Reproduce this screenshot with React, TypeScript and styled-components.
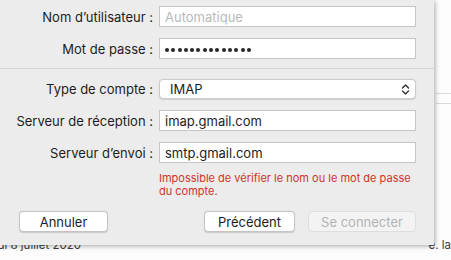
import styled, { createGlobalStyle } from "styled-components";

const Global = createGlobalStyle`
  html, body {
    margin: 0;
    padding: 0;
    width: 451px;
    height: 260px;
    overflow: hidden;
    background: #ffffff;
    font-family: Inter, "Liberation Sans", Arial, sans-serif;
    -webkit-font-smoothing: antialiased;
  }
`;

const Window = styled.div`
  position: relative;
  width: 451px;
  height: 260px;
  background: #fdfdfd;
  display: flex;
  flex-direction: column;
`;

const ListLines = styled.div`
  margin-top: 93px;
  margin-left: 436px;
  height: 9px;
  border-top: 1px solid #dadada;
  border-bottom: 1px solid #dadada;
`;

const DateRow = styled.div`
  margin-top: auto;
  height: 21px;
  display: flex;
  justify-content: space-between;
  font-size: 11.5px;
  color: #3a3a3a;
  line-height: 13px;
`;

const DateCell = styled.div`
  width: 81px;
  display: flex;
  justify-content: flex-end;
  overflow: hidden;
  white-space: nowrap;
`;

const Sheet = styled.div`
  position: absolute;
  left: 0;
  top: 0;
  width: 434px;
  height: 245px;
  box-sizing: border-box;
  background: #ececec;
  box-shadow: 1px 1px 5px rgba(0, 0, 0, 0.35);
  padding-top: 6px;
  display: flex;
  flex-direction: column;
  color: #1d1d1d;
  font-size: 13px;
`;

const Form = styled.div`
  display: grid;
  grid-template-columns: 153px 257px;
  column-gap: 6px;
  row-gap: 11px;
`;

const Label = styled.label`
  justify-self: end;
  align-self: center;
  white-space: nowrap;
`;

const Field = styled.div<{ $muted?: boolean }>`
  height: 21px;
  box-sizing: border-box;
  background: #ffffff;
  border: 1px solid #c6c6c6;
  padding: 0 5px;
  display: flex;
  align-items: center;
  color: ${p => (p.$muted ? "#b9b9b9" : "#1d1d1d")};
  white-space: nowrap;
`;

const Dots = styled.div`
  display: flex;
  gap: 2.3px;
  padding: 2px 0 0 0;
`;

const Dot = styled.span`
  width: 4px;
  height: 4px;
  border-radius: 50%;
  background: #262626;
`;

const Separator = styled.div`
  height: 1px;
  background: #d6d6d6;
  margin: 9px 0 10px;
`;

const Popup = styled.div`
  height: 20px;
  box-sizing: border-box;
  background: #ffffff;
  border: 1px solid #cbcbcb;
  border-radius: 4px;
  box-shadow: 0 0.5px 1px rgba(0, 0, 0, 0.12);
  padding: 0 5px 0 10px;
  display: flex;
  align-items: center;
  justify-content: space-between;
`;

const ErrorText = styled.div`
  margin: 9px 0 0 159px;
  width: 257px;
  font-size: 11px;
  line-height: 13px;
  color: #d2332a;
`;

const Buttons = styled.div`
  margin-top: 13px;
  padding: 0 18px 0 19px;
  display: flex;
  align-items: center;
  gap: 13px;
`;

const Button = styled.div<{ $width: number; $disabled?: boolean }>`
  width: ${p => p.$width}px;
  height: 21px;
  box-sizing: border-box;
  border-radius: 4px;
  border: 1px solid ${p => (p.$disabled ? "#dedede" : "#c4c4c4")};
  background: ${p => (p.$disabled ? "#f3f3f3" : "#ffffff")};
  box-shadow: ${p => (p.$disabled ? "none" : "0 0.5px 1px rgba(0,0,0,0.15)")};
  color: ${p => (p.$disabled ? "#b4b4b4" : "#1d1d1d")};
  display: flex;
  align-items: center;
  justify-content: center;
  white-space: nowrap;
`;

const Spacer = styled.div`
  flex: 1;
`;

function Chevrons() {
  return (
    <svg width="9" height="13" viewBox="0 0 9 13" fill="none">
      <path d="M1.5 5L4.5 2L7.5 5" stroke="#2b2b2b" strokeWidth="1.3" strokeLinecap="round" strokeLinejoin="round" />
      <path d="M1.5 8L4.5 11L7.5 8" stroke="#2b2b2b" strokeWidth="1.3" strokeLinecap="round" strokeLinejoin="round" />
    </svg>
  );
}

const password = Array.from({ length: 14 }, (_, i) => i);

export default function App() {
  return (
    <>
      <Global />
      <Window>
        <ListLines />
        <DateRow>
          <DateCell>mercredi 8 juillet 2020</DateCell>
          <span>e. la</span>
        </DateRow>
        <Sheet>
          <Form>
            <Label>Nom d’utilisateur :</Label>
            <Field $muted>Automatique</Field>
            <Label>Mot de passe :</Label>
            <Field>
              <Dots>
                {password.map(i => (
                  <Dot key={i} />
                ))}
              </Dots>
            </Field>
          </Form>
          <Separator />
          <Form>
            <Label>Type de compte :</Label>
            <Popup>
              <span>IMAP</span>
              <Chevrons />
            </Popup>
            <Label>Serveur de réception :</Label>
            <Field>imap.gmail.com</Field>
            <Label>Serveur d’envoi :</Label>
            <Field>smtp.gmail.com</Field>
          </Form>
          <ErrorText>Impossible de vérifier le nom ou le mot de passe du compte.</ErrorText>
          <Buttons>
            <Button $width={89}>Annuler</Button>
            <Spacer />
            <Button $width={91}>Précédent</Button>
            <Button $width={108} $disabled>Se connecter</Button>
          </Buttons>
        </Sheet>
      </Window>
    </>
  );
}
